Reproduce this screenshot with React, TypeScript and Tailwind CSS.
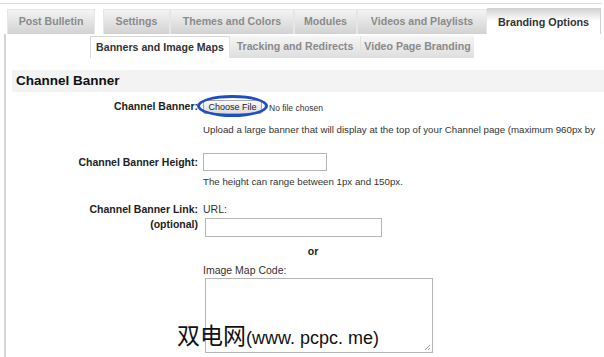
import React from "react";

const mainTabs = [
  { label: "Post Bulletin", w: "w-[88px]", gapAfter: true },
  { label: "Settings", w: "w-[67px]" },
  { label: "Themes and Colors", w: "w-[124px]" },
  { label: "Modules", w: "w-[63px]" },
  { label: "Videos and Playlists", w: "w-[130px]" },
];

const subTabs = [
  { label: "Banners and Image Maps", w: "w-[139px]", active: true },
  { label: "Tracking and Redirects", w: "w-[131px]" },
  { label: "Video Page Branding", w: "w-[114px]" },
];

const App = () => {
  return (
    <div className="relative w-[604px] h-[357px] overflow-hidden bg-white font-['Liberation_Sans',Arial,sans-serif] text-[#222]">
      {/* Top line */}
      <div className="h-[3px]" />
      <div className="h-px bg-[#dcdcdc] mr-[2px]" />

      {/* Main tabs */}
      <div className="flex items-end h-[30px] pl-[7px] pt-[5px]">
        {mainTabs.map((t) => (
          <div
            key={t.label}
            className={`${t.w} ${t.gapAfter ? "mr-[8px]" : ""} h-[25px] flex items-center justify-center whitespace-nowrap border-l border-t border-r border-[#e6e6e6] bg-gradient-to-b from-[#f4f4f4] to-[#d2d2d2] text-[10.6px] font-bold text-[#8a8a8a]`}
          >
            {t.label}
          </div>
        ))}
        <div className="w-[114px] h-[26px] flex items-center justify-center whitespace-nowrap bg-gradient-to-b from-[#d0d0d0] via-white to-white border-r border-[#cfcfcf] text-[10.8px] font-bold text-[#333]">
          <span className="mt-[2px]">Branding Options</span>
        </div>
      </div>

      {/* Content panel */}
      <div className="ml-[4px] border-l-2 border-[#d4d4d4] h-[330px]">
        {/* Sub tabs */}
        <div className="flex pl-[84px] pt-[2px] h-[24px]">
          {subTabs.map((t) =>
            t.active ? (
              <div
                key={t.label}
                className={`${t.w} h-[22px] flex items-center justify-center whitespace-nowrap bg-white border-l border-t border-[#d8d8d8] text-[10.6px] font-bold text-[#333]`}
              >
                {t.label}
              </div>
            ) : (
              <div
                key={t.label}
                className={`${t.w} h-[22px] flex items-center justify-center whitespace-nowrap bg-gradient-to-b from-[#f6f6f6] to-[#dedede] border-l border-[#e2e2e2] text-[10.6px] font-bold text-[#8a8a8a]`}
              >
                {t.label}
              </div>
            )
          )}
        </div>

        {/* Section header */}
        <div className="mt-[12px] ml-[6px] h-[22px] bg-[#f3f3f3] flex items-center pl-[4px]">
          <span className="text-[13.5px] font-bold text-[#111]">Channel Banner</span>
        </div>

        {/* Form */}
        <div className="grid grid-cols-[192px_1fr] gap-x-[5px] mt-[7px] text-[10.5px]">
          {/* Channel Banner */}
          <div className="text-right font-bold leading-[15px]">Channel Banner:</div>
          <div className="h-[15px] flex items-center">
            <div className="relative">
              <button className="h-[14px] w-[59px] text-[9px] leading-none bg-gradient-to-b from-[#fafafa] to-[#dcdcdc] border border-[#a8a8a8] rounded-[2px] text-[#222]">
                Choose File
              </button>
              <div className="absolute -left-[6px] -top-[4px] w-[71px] h-[22px] rounded-[50%] border-[3px] border-[#1d4ec4]" />
            </div>
            <span className="ml-[7px] mt-[4px] text-[8.5px] text-[#333] whitespace-nowrap">No file chosen</span>
          </div>

          <div />
          <div className="pt-[10px] text-[9.7px] leading-[12px] whitespace-nowrap text-[#333]">
            Upload a large banner that will display at the top of your Channel page (maximum 960px by
          </div>

          {/* Height */}
          <div className="text-right font-bold pt-[17px] leading-[18px]">Channel Banner Height:</div>
          <div className="pt-[17px]">
            <div className="w-[124px] h-[18px] border border-[#b5b5b5] bg-white" />
          </div>

          <div />
          <div className="pt-[5px] text-[9.7px] leading-[12px] text-[#333]">
            The height can range between 1px and 150px.
          </div>

          {/* Link */}
          <div className="text-right font-bold pt-[14px] leading-[15px]">
            Channel Banner Link:
            <br />
            (optional)
          </div>
          <div className="pt-[14px]">
            <div className="leading-[15px] text-[#333]">URL:</div>
            <div className="ml-[2px] mt-[1px] w-[177px] h-[19px] border border-[#b5b5b5] bg-white" />
            <div className="w-[220px] text-center font-bold mt-[7px] leading-[14px] text-[#222]">or</div>
            <div className="mt-[5px] leading-[14px] text-[#333]">Image Map Code:</div>
            <div className="relative ml-[2px] mt-[1px] w-[228px] h-[75px] border border-[#b5b5b5] bg-white">
              <svg className="absolute right-[1px] bottom-[1px]" width="8" height="8" viewBox="0 0 8 8">
                <path d="M7 2 L2 7 M7 5 L5 7" stroke="#999" strokeWidth="1" />
              </svg>
            </div>
          </div>
        </div>
      </div>

      {/* Watermark */}
      <div className="absolute left-[177px] top-[317px] flex items-baseline whitespace-nowrap text-[#111]">
        <span className="text-[23px] font-['Noto_Sans_CJK_SC',sans-serif]">双电网</span>
        <span className="text-[18px] font-['Liberation_Sans','Noto_Sans_CJK_SC',sans-serif]">(www. pcpc. me)</span>
      </div>
    </div>
  );
};

export default App;
